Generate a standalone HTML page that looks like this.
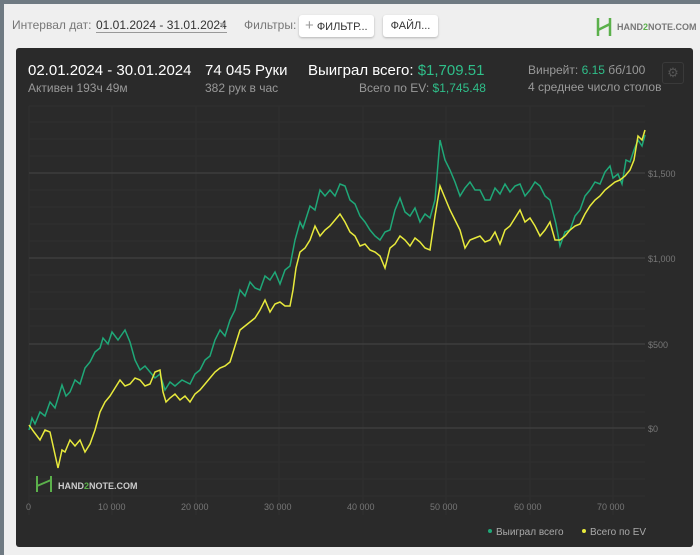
<!DOCTYPE html>
<html><head><meta charset="utf-8"><style>
body{margin:0;width:700px;height:555px;background:#6f7a82;font-family:"Liberation Sans",sans-serif;overflow:hidden;position:relative}
.main{position:absolute;left:4px;top:4px;right:0;bottom:0;background:#efefef}
.card{position:absolute;left:16px;top:48px;width:677px;height:499px;background:#2a2a2a;border-radius:3px}
.t{position:absolute;white-space:nowrap}
.btn{position:absolute;background:#fff;border-radius:3px;box-shadow:0 1px 2px rgba(0,0,0,.25);font-size:11px;color:#333;height:22px;line-height:22px}
</style></head><body>
<div class="main"></div>
<div class="t" style="left:12px;top:18px;font-size:12px;color:#777">Интервал дат:</div>
<div class="t" style="left:96px;top:18px;font-size:12px;color:#333;border-bottom:1px solid #999">01.01.2024 - 31.01.2024</div>
<div class="t" style="left:218px;top:20px;font-size:9px;color:#aaa">▼</div>
<div class="t" style="left:244px;top:18px;font-size:12px;color:#777">Фильтры:</div>
<div class="btn" style="left:299px;top:15px;width:75px"><span style="color:#999;margin-left:6px;font-size:15px">+</span> ФИЛЬТР...</div>
<div class="btn" style="left:383px;top:15px;width:55px;text-align:center">ФАЙЛ...</div>
<svg class="t" style="left:596px;top:17px" width="16" height="20"><path d="M2 1v18M14 1v18M2 13l12-6" stroke="#5bb04b" stroke-width="2.5" fill="none"/></svg>
<div class="t" style="left:617px;top:22px;font-size:9px;font-weight:bold;color:#777">HAND<span style="color:#5bb04b">2</span>NOTE.COM</div>
<div class="card"></div>
<div class="t" style="left:28px;top:62px;font-size:15px;color:#fff">02.01.2024 - 30.01.2024</div>
<div class="t" style="left:28px;top:81px;font-size:12px;color:#999">Активен 193ч 49м</div>
<div class="t" style="left:205px;top:62px;font-size:15px;color:#fff">74 045 Руки</div>
<div class="t" style="left:205px;top:81px;font-size:12px;color:#999">382 рук в час</div>
<div class="t" style="left:308px;top:62px;font-size:15px;color:#fff">Выиграл всего: <span style="color:#2fbf8a">$1,709.51</span></div>
<div class="t" style="left:359px;top:81px;font-size:12px;color:#999">Всего по EV: <span style="color:#2fbf8a">$1,745.48</span></div>
<div class="t" style="left:528px;top:63px;font-size:12px;color:#999">Винрейт: <span style="color:#2fbf8a">6.15</span> бб/100</div>
<div class="t" style="left:528px;top:80px;font-size:12px;color:#999">4 среднее число столов</div>
<div class="t" style="left:662px;top:62px;width:20px;height:20px;border:1px solid #3a3a3a;border-radius:3px;color:#555;font-size:13px;text-align:center;line-height:20px">⚙</div>
<svg class="t" style="left:0;top:0" width="700" height="555">
<g stroke="#303030" stroke-width="1">
<path d="M29 106H645M29 122H645M29 139H645M29 156H645M29 190H645M29 207H645M29 224H645M29 241H645M29 275H645M29 292H645M29 309H645M29 326H645M29 361H645M29 378H645M29 395H645M29 412H645M29 445H645M29 462H645M29 479H645M29 496H645"/>
<path d="M29 106V515M112 106V515M196 106V515M279 106V515M363 106V515M446 106V515M530 106V515M613 106V515"/>
</g>
<g stroke="#454545" stroke-width="1"><path d="M29 173H645M29 258H645M29 344H645M29 428H645"/></g>
<g font-size="9" fill="#777" font-family="Liberation Sans"><text x="648" y="177">$1,500</text><text x="648" y="262">$1,000</text><text x="648" y="348">$500</text><text x="648" y="432">$0</text>
<text x="26" y="510">0</text><text x="98" y="510">10 000</text><text x="181" y="510">20 000</text><text x="264" y="510">30 000</text><text x="347" y="510">40 000</text><text x="430" y="510">50 000</text><text x="514" y="510">60 000</text><text x="597" y="510">70 000</text></g>
<polyline fill="none" stroke="#1fa878" stroke-width="1.5" points="29,430 32,418 35,424 40,412 45,416 50,402 55,408 62,385 66,396 70,392 75,380 80,384 85,368 90,362 95,352 100,348 103,338 108,344 112,332 118,340 125,330 130,342 135,360 140,370 145,366 150,372 155,378 160,374 165,390 170,382 175,386 182,380 190,384 195,374 200,370 205,360 210,356 215,340 220,330 225,336 230,320 235,310 240,290 245,296 250,282 255,288 260,290 265,276 270,280 275,272 280,284 285,270 290,266 295,240 300,222 303,228 310,206 315,210 320,190 325,196 330,190 335,196 340,184 345,186 350,200 355,204 360,216 365,222 370,230 375,236 380,240 385,232 390,230 395,210 400,198 405,212 410,216 415,208 420,222 425,214 430,218 435,200 440,140 445,160 450,170 455,182 460,196 465,188 470,182 475,190 480,190 485,200 490,200 495,188 500,194 505,184 510,192 515,186 520,184 525,196 530,190 535,182 540,186 545,196 550,200 553,212 556,224 560,246 565,232 570,230 575,216 580,210 585,196 590,190 595,182 600,184 605,172 610,166 613,178 618,174 622,184 626,160 630,162 634,150 638,140 642,146 645,135"/>
<polyline fill="none" stroke="#e8ea3c" stroke-width="1.5" points="29,425 34,432 40,440 45,430 50,432 54,450 58,468 62,450 65,452 70,440 75,446 80,440 85,452 90,444 95,430 100,412 105,402 110,396 115,388 120,380 125,386 130,384 135,378 140,380 145,386 150,384 155,372 160,370 163,392 166,402 170,398 175,394 180,400 185,396 190,402 195,394 200,390 205,384 210,378 215,372 220,368 225,366 230,362 235,346 240,330 245,326 250,322 255,318 260,310 265,300 270,312 275,304 280,302 285,306 290,306 293,290 296,268 300,252 305,248 310,240 315,226 320,236 325,230 330,226 335,220 340,214 345,222 350,232 355,236 360,246 365,244 370,250 375,252 380,256 385,268 390,248 395,244 400,236 405,240 410,246 415,238 420,242 425,248 430,250 435,216 440,186 445,198 450,210 455,220 460,230 465,248 470,240 475,238 480,236 485,242 490,240 495,232 500,244 505,230 510,226 515,218 520,210 525,222 530,218 535,226 540,236 545,230 550,222 555,240 560,240 565,236 570,230 575,226 580,224 585,214 590,206 595,200 600,196 605,190 610,186 615,182 620,180 625,176 630,170 634,160 638,136 642,140 645,130"/>
<path d="M37 476v16M51 476v16M37 486l14-6" stroke="#5bb04b" stroke-width="2" fill="none"/>
<text x="58" y="489" font-size="9" font-weight="bold" fill="#ccc" font-family="Liberation Sans">HAND<tspan fill="#5bb04b">2</tspan>NOTE.COM</text>
<circle cx="490" cy="531" r="2" fill="#1fa878"/><circle cx="584" cy="531" r="2" fill="#e8ea3c"/>
<g font-size="10" fill="#aaa" font-family="Liberation Sans"><text x="496" y="535">Выиграл всего</text><text x="590" y="535">Всего по EV</text></g>
</svg>
</body></html>
